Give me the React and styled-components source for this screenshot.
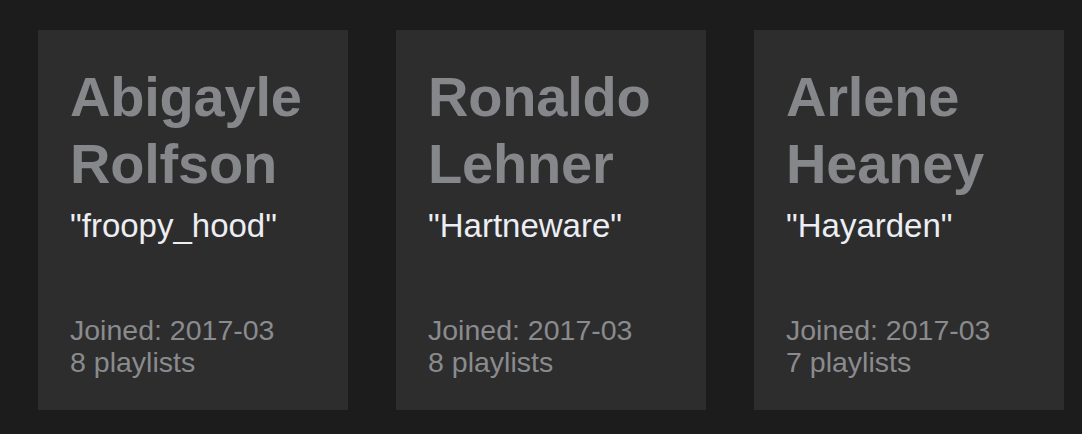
import React from "react";
import styled, { createGlobalStyle } from "styled-components";

const GlobalStyle = createGlobalStyle`
  html, body {
    margin: 0;
    padding: 0;
    background: #1c1c1c;
  }
  body {
    font-family: "Liberation Sans", Arial, Helvetica, sans-serif;
  }
`;

const users = [
  { id: 1, first: "Abigayle", last: "Rolfson", handle: "froopy_hood", joined: "2017-03", playlists: 8 },
  { id: 2, first: "Ronaldo", last: "Lehner", handle: "Hartneware", joined: "2017-03", playlists: 8 },
  { id: 3, first: "Arlene", last: "Heaney", handle: "Hayarden", joined: "2017-03", playlists: 7 },
];

const Page = styled.div`
  width: 1082px;
  height: 434px;
  overflow: hidden;
  background: #1c1c1c;
  box-sizing: border-box;
  padding: 30px 0 0 38px;
`;

const UserRow = styled.div`
  display: flex;
  gap: 48px;
`;

const Card = styled.div`
  flex: 0 0 310px;
  height: 380px;
  box-sizing: border-box;
  padding: 33px 32px 32px;
  background: #2d2d2d;
  display: flex;
  flex-direction: column;
`;

const Name = styled.h2`
  margin: 0;
  font-size: 56px;
  line-height: 67px;
  font-weight: 700;
  color: #86878b;
  letter-spacing: -0.2px;
`;

const Handle = styled.div`
  margin-top: 10px;
  font-size: 33px;
  color: #eceef3;
`;

const Meta = styled.div`
  margin-top: auto;
  font-size: 28.5px;
  line-height: 32px;
  color: #8a8b8e;
`;

const UserCard = ({ first, last, handle, joined, playlists }) => (
  <Card>
    <Name>
      {first}
      <br />
      {last}
    </Name>
    <Handle>"{handle}"</Handle>
    <Meta>
      Joined: {joined}
      <br />
      {playlists} playlists
    </Meta>
  </Card>
);

const App = () => (
  <>
    <GlobalStyle />
    <Page>
      <UserRow>
        {users.map(user => (
          <UserCard key={user.id} {...user} />
        ))}
      </UserRow>
    </Page>
  </>
);

export default App;
